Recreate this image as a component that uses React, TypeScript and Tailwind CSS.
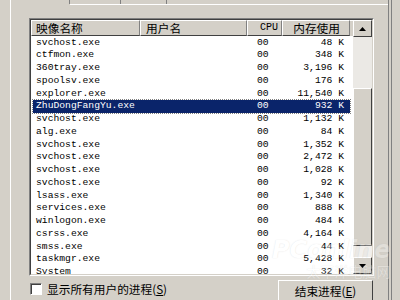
import React from "react";

const rows: [string, string, string][] = [
  ["svchost.exe", "00", "48 K"],
  ["ctfmon.exe", "00", "348 K"],
  ["360tray.exe", "00", "3,196 K"],
  ["spoolsv.exe", "00", "176 K"],
  ["explorer.exe", "00", "11,540 K"],
  ["ZhuDongFangYu.exe", "00", "932 K"],
  ["svchost.exe", "00", "1,132 K"],
  ["alg.exe", "00", "84 K"],
  ["svchost.exe", "00", "1,352 K"],
  ["svchost.exe", "00", "2,472 K"],
  ["svchost.exe", "00", "1,028 K"],
  ["svchost.exe", "00", "92 K"],
  ["lsass.exe", "00", "1,340 K"],
  ["services.exe", "00", "888 K"],
  ["winlogon.exe", "00", "484 K"],
  ["csrss.exe", "00", "4,164 K"],
  ["smss.exe", "00", "44 K"],
  ["taskmgr.exe", "00", "5,428 K"],
  ["System", "00", "32 K"],
];

const cjk = "font-['Noto_Sans_CJK_SC',sans-serif]";

function HeaderCell({ w, children, align }: { w: string; children?: React.ReactNode; align: string }) {
  return (
    <div
      className={`${w} h-full shrink-0 flex items-center border-t border-l border-t-white border-l-white border-b border-r border-b-[#404040] border-r-[#808080] bg-[#d4d0c8] ${align}`}
    >
      {children}
    </div>
  );
}

export default function App() {
  return (
    <div className="w-[400px] h-[300px] bg-[#d4d0c8] overflow-hidden flex font-['Liberation_Mono',monospace] text-black relative">
      {/* left margin */}
      <div className="w-[10px] shrink-0" />
      {/* tab panel */}
      <div className="w-[379px] shrink-0 flex flex-col border-l border-l-white border-r border-r-[#808080]">
        {/* tab strip */}
        <div className="h-[4px] flex shrink-0">
          <div className="w-[59px] border-r border-r-[#808080]" />
          <div className="w-[50px]" />
          <div className="w-[1px] bg-[#808080]" />
          <div className="w-[45px]" />
          <div className="w-[1px] bg-[#808080]" />
          <div className="flex-1" />
        </div>
        <div className="h-[1px] flex shrink-0">
          <div className="w-[59px]" />
          <div className="flex-1 bg-white" />
        </div>
        {/* content */}
        <div className="flex flex-col pt-[13px] pl-[18px] pr-[14px]">
          {/* list view */}
          <div className="h-[258px] border-t border-l border-t-[#808080] border-l-[#808080] border-b border-r border-b-white border-r-white">
            <div className="h-full border-t border-l border-t-[#404040] border-l-[#404040] border-b border-r border-b-[#d4d0c8] border-r-[#d4d0c8] bg-white flex">
              <div className="flex-1 flex flex-col overflow-hidden">
                {/* header */}
                <div className={`h-[16px] shrink-0 flex text-[11.7px] leading-none ${cjk}`}>
                  <HeaderCell w="w-[109px]" align="pl-[4px]">映像名称</HeaderCell>
                  <HeaderCell w="w-[107px]" align="pl-[5px]">用户名</HeaderCell>
                  <HeaderCell w="w-[35px]" align="justify-end pr-[3px]">
                    <span className="font-['Liberation_Mono',monospace] text-[10px]">CPU</span>
                  </HeaderCell>
                  <HeaderCell w="w-[68px]" align="justify-end pr-[9px]">内存使用</HeaderCell>
                  <div className="flex-1 h-full bg-[#d4d0c8] border-t border-t-white" />
                </div>
                {/* rows */}
                <div className="flex flex-col text-[9.7px] leading-none">
                  {rows.map(([name, cpu, mem], i) => {
                    const sel = i === 5;
                    return (
                      <div key={i} className="h-[12.75px] shrink-0 flex">
                        <div
                          className={`ml-[2px] w-[317px] flex items-center ${
                            sel ? "bg-[#0a246a] text-white outline outline-1 outline-dotted outline-[#808080]" : ""
                          }`}
                        >
                          <div className="w-[107px] pl-[3px] whitespace-pre">{name}</div>
                          <div className="w-[107px]" />
                          <div className="w-[35px] pl-[10px]">{cpu}</div>
                          <div className="w-[68px] pr-[6px] text-right whitespace-pre">{mem}</div>
                        </div>
                      </div>
                    );
                  })}
                </div>
              </div>
              {/* scrollbar */}
              <div className="w-[19px] shrink-0 flex flex-col bg-[#ebe9e5]">
                <div className="h-[17px] shrink-0 bg-[#d4d0c8] border-t border-l border-t-white border-l-white border-b border-r border-b-[#404040] border-r-[#404040] flex items-center justify-center">
                  <svg width="7" height="4" viewBox="0 0 7 4">
                    <path d="M3.5 0 L7 4 L0 4 Z" fill="#000" />
                  </svg>
                </div>
                <div className="flex-1 flex flex-col">
                  <div className="h-[51px] shrink-0" />
                  <div className="h-[158px] shrink-0 bg-[#d4d0c8] border-t border-l border-t-white border-l-white border-b border-r border-b-[#404040] border-r-[#404040]" />
                </div>
                <div className="h-[17px] shrink-0 bg-[#d4d0c8] border-t border-l border-t-white border-l-white border-b border-r border-b-[#404040] border-r-[#404040] flex items-center justify-center">
                  <svg width="7" height="4" viewBox="0 0 7 4">
                    <path d="M0 0 L7 0 L3.5 4 Z" fill="#000" />
                  </svg>
                </div>
              </div>
            </div>
          </div>
          {/* bottom row */}
          <div className="flex items-start">
            <div className={`mt-[7px] ml-[1px] flex items-center gap-[5px] text-[11.7px] leading-none ${cjk}`}>
              <div className="w-[12px] h-[12px] bg-white border-t border-l border-t-[#808080] border-l-[#808080] border-b border-r border-b-white border-r-white shadow-[inset_1px_1px_0_#404040]" />
              <span>
                显示所有用户的进程(<span className="underline">S</span>)
              </span>
            </div>
            <div className="flex-1" />
            <div
              className={`mt-[4px] mr-[1px] w-[95px] h-[24px] bg-[#d4d0c8] border-t border-l border-t-white border-l-white border-b border-r border-b-[#404040] border-r-[#404040] flex items-start justify-center pt-[4px] text-[11.7px] leading-none ${cjk}`}
            >
              <span>
                结束进程(<span className="underline">E</span>)
              </span>
            </div>
          </div>
        </div>
      </div>
      <div className="w-[2px] shrink-0" />
      <div className="w-[1px] shrink-0 bg-[#808080]" />
      {/* watermark */}
      <div className="absolute left-[272px] top-[238px] pointer-events-none select-none flex flex-col items-end opacity-30">
        <span className="font-['DejaVu_Sans',sans-serif] italic font-bold text-[24px] leading-none text-white [text-shadow:0_0_1px_#999]">
          PConline
        </span>
        <span className={`${cjk} text-[14px] leading-none text-white [text-shadow:0_0_1px_#999] mt-[2px]`}>
          太平洋电脑网
        </span>
      </div>
    </div>
  );
}
